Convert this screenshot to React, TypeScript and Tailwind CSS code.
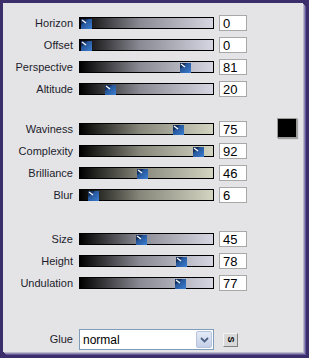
import React from "react";

const font = { fontFamily: '"Liberation Sans", Arial, sans-serif' };

function Thumb({ value }: { value: number }) {
  const travel = 122;
  const left = 1 + Math.round((value / 100) * travel);
  return (
    <svg
      width="11"
      height="10"
      viewBox="0 0 11 10"
      className="absolute top-[1px]"
      style={{ left }}
    >
      <defs>
        <linearGradient id="tg" x1="0" y1="0" x2="1" y2="1">
          <stop offset="0" stopColor="#1b3f78" />
          <stop offset="1" stopColor="#3b7fd4" />
        </linearGradient>
      </defs>
      <rect x="0" y="0" width="11" height="10" fill="url(#tg)" />
      <polygon points="0,0 7,0 0,6" fill="#15305e" />
      <line x1="1" y1="1" x2="5" y2="4" stroke="#ffffff" strokeWidth="1.2" />
    </svg>
  );
}

function SliderRow({
  label,
  value,
  tone,
}: {
  label: string;
  value: number;
  tone: "lav" | "khaki";
}) {
  const grad =
    tone === "lav"
      ? "bg-[linear-gradient(to_right,#000000,#8a8a94_45%,#d6d6e2)]"
      : "bg-[linear-gradient(to_right,#000000,#86867a_45%,#d4d4c2)]";
  return (
    <div className="flex h-[22px] items-center">
      <div className="w-[70px] text-right text-[11px] leading-none text-[#1c1c2c]">
        {label}
      </div>
      <div className={`relative ml-[6px] h-[12px] w-[135px] border border-black ${grad}`}>
        <Thumb value={value} />
      </div>
      <div className="ml-[5px] flex h-[16px] w-[28px] items-center border border-[#a8a8a8] bg-white pl-[3px] text-[13px] leading-none text-black">
        {value}
      </div>
    </div>
  );
}

export default function App() {
  return (
    <div
      className="h-[358px] w-[309px] bg-[#3b2e6a] pl-[3px] pt-[3px] pr-[6px] pb-[6px]"
      style={font}
    >
      <div className="flex h-full w-full flex-col bg-[#e4e4e6] pt-[9px] shadow-[1px_1px_0_#bcb8cc,2px_2px_0_#908aae,3px_3px_0_#61579a]">
        <div className="flex flex-col">
          <SliderRow label="Horizon" value={0} tone="lav" />
          <SliderRow label="Offset" value={0} tone="lav" />
          <SliderRow label="Perspective" value={81} tone="lav" />
          <SliderRow label="Altitude" value={20} tone="lav" />
        </div>
        <div className="mt-[18px] flex">
          <div className="flex flex-col">
            <SliderRow label="Waviness" value={75} tone="khaki" />
            <SliderRow label="Complexity" value={92} tone="khaki" />
            <SliderRow label="Brilliance" value={46} tone="khaki" />
            <SliderRow label="Blur" value={6} tone="khaki" />
          </div>
          <div className="ml-[30px] h-[20px] w-[20px] border border-[#9a9a9a] bg-black shadow-[1px_1px_1px_#a0a0a0]" />
        </div>
        <div className="mt-[22px] flex flex-col">
          <SliderRow label="Size" value={45} tone="lav" />
          <SliderRow label="Height" value={78} tone="lav" />
          <SliderRow label="Undulation" value={77} tone="lav" />
        </div>
        <div className="mt-[35px] flex h-[21px] items-center">
          <div className="w-[70px] text-right text-[11px] leading-none text-[#1c1c2c]">
            Glue
          </div>
          <div className="ml-[6px] flex h-[21px] w-[135px] items-center border border-[#7f9db9] bg-white">
            <span className="flex-1 pl-[3px] text-[12px] leading-none text-black">
              normal
            </span>
            <div className="m-[1px] flex h-[17px] w-[16px] items-center justify-center rounded-[2px] border border-[#b8c4dc] bg-[linear-gradient(to_bottom,#e4eaf6,#c4d0e8)]">
              <svg width="9" height="6" viewBox="0 0 9 6">
                <polyline
                  points="1,1 4.5,4.5 8,1"
                  fill="none"
                  stroke="#4d6185"
                  strokeWidth="1.8"
                />
              </svg>
            </div>
          </div>
          <div className="ml-[9px] flex h-[14px] w-[15px] items-center justify-center border border-[#f4f4f4] border-b-[#808080] border-r-[#808080] bg-[#d8d8d8]">
            <span className="rotate-90 text-[9px] font-bold leading-none text-black">
              S
            </span>
          </div>
        </div>
      </div>
    </div>
  );
}
